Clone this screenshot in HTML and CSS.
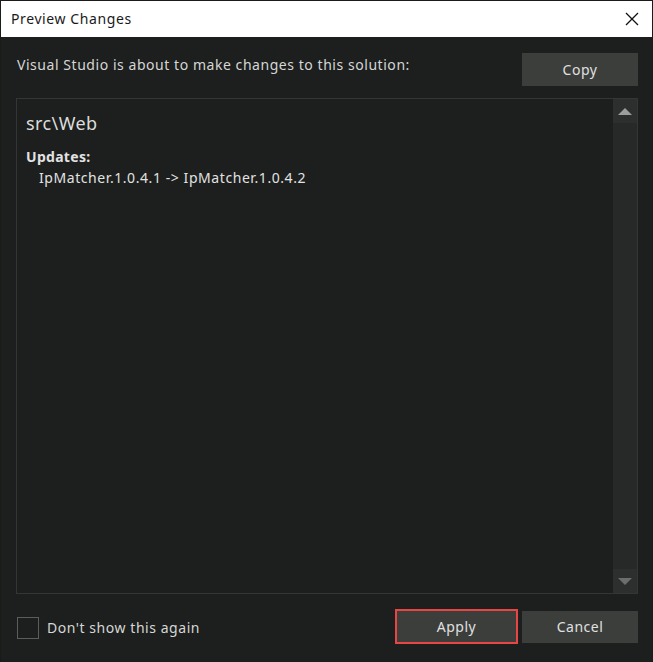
FILE: index.html
```html
<!DOCTYPE html>
<html>
<head>
<meta charset="utf-8">
<title>Preview Changes</title>
<link rel="stylesheet" href="styles.css">
</head>
<body>
<div class="window">
  <div class="titlebar">
    <span class="title">Preview Changes</span>
    <span class="close">
      <svg width="14" height="14" viewBox="0 0 14 14"><path d="M1 1 L13 13 M13 1 L1 13" stroke="#111" stroke-width="1.3" fill="none"/></svg>
    </span>
  </div>
  <div class="content">
    <div class="top-row">
      <span class="intro">Visual Studio is about to make changes to this solution:</span>
      <button class="btn">Copy</button>
    </div>
    <div class="log">
      <div class="log-text">
        <div class="project">src\Web</div>
        <div class="section">Updates:</div>
        <div class="item">IpMatcher.1.0.4.1 -&gt; IpMatcher.1.0.4.2</div>
      </div>
      <div class="scrollbar">
        <div class="arrow up"></div>
        <div class="track"></div>
        <div class="arrow down"></div>
      </div>
    </div>
    <div class="bottom-row">
      <label class="check"><span class="box"></span><span>Don't show this again</span></label>
      <div class="buttons">
        <button class="btn focused">Apply</button>
        <button class="btn">Cancel</button>
      </div>
    </div>
  </div>
</div>
</body>
</html>
```

FILE: styles.css
```css
html, body { margin: 0; padding: 0; }
body { width: 653px; height: 662px; font-family: "Noto Sans", "Open Sans", sans-serif; }
.window {
  box-sizing: border-box;
  width: 653px;
  height: 662px;
  border: 1px solid #1a1c1a;
  border-bottom: none;
  display: flex;
  flex-direction: column;
}
.titlebar {
  height: 36px;
  background: #ffffff;
  display: flex;
  align-items: center;
  justify-content: space-between;
  padding: 0 13px 0 10px;
  flex-shrink: 0;
}
.title { font-size: 14px; letter-spacing: 0.6px; color: #1a1a1a; margin-top: -2px; }
.close { display: flex; align-items: center; }
.content {
  flex: 1;
  background: #1c1f1d;
  padding: 16px 14px 18px 15px;
  display: flex;
  flex-direction: column;
  min-height: 0;
}
.top-row {
  display: flex;
  align-items: flex-start;
  justify-content: space-between;
  height: 33px;
}
.intro { font-size: 14px; line-height: 20px; letter-spacing: 0.55px; color: #d6d6d6; padding-left: 1px; margin-top: 2px; }
.btn {
  width: 116px;
  height: 33px;
  background: #3b3e3b;
  border: none;
  color: #e0e0e0;
  font-family: "Noto Sans", "Open Sans", sans-serif;
  font-size: 14px;
  letter-spacing: 0.5px;
  padding: 0;
}
.log {
  margin-top: 12px;
  flex: 1;
  border: 1px solid #333633;
  display: flex;
  min-height: 0;
}
.log-text {
  flex: 1;
  padding: 11px 9px;
  color: #e2e2e2;
}
.project { font-size: 18px; line-height: 26px; letter-spacing: 0.4px; color: #dcdcdc; }
.section { font-size: 14px; font-weight: bold; margin-top: 11px; line-height: 20px; letter-spacing: 0.3px; }
.item { font-size: 14px; padding-left: 13px; line-height: 21px; letter-spacing: 0.57px; }
.scrollbar {
  width: 24px;
  background: #262927;
  display: flex;
  flex-direction: column;
}
.arrow { height: 24px; display: flex; align-items: center; justify-content: center; background: #2c2f2d; }
.arrow.up::before {
  content: "";
  border-left: 7px solid transparent;
  border-right: 7px solid transparent;
  border-bottom: 7px solid #9c9e9c;
}
.arrow.down::before {
  content: "";
  border-left: 7px solid transparent;
  border-right: 7px solid transparent;
  border-top: 7px solid #6c6e6c;
}
.track { flex: 1; }
.bottom-row {
  margin-top: 15px;
  height: 35px;
  display: flex;
  align-items: center;
  justify-content: space-between;
}
.check { display: flex; align-items: center; gap: 8px; color: #d6d6d6; font-size: 14px; letter-spacing: 0.55px; padding-left: 1px; margin-top: 2px; }
.box { width: 20px; height: 20px; border: 1px solid #5a5d5a; display: inline-block; }
.buttons { display: flex; align-items: center; gap: 4px; }
.btn.focused {
  width: 123px;
  height: 35px;
  border: 2px solid #e84545;
}
.buttons .btn:not(.focused) { height: 32px; }
```
